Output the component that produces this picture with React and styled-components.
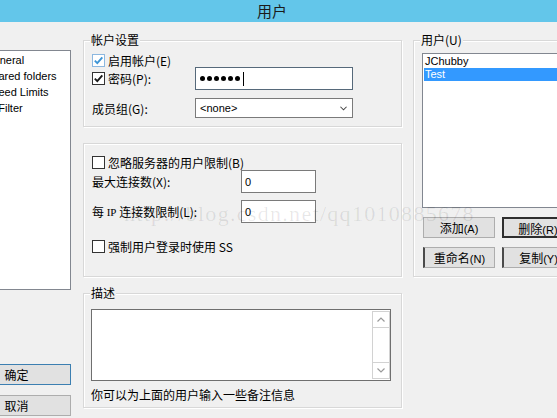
import React from 'react';
import styled, { createGlobalStyle } from 'styled-components';

const GlobalStyle = createGlobalStyle`
  html, body {
    margin: 0;
    padding: 0;
    background: #f0f0f0;
  }
  body {
    font-family: "Noto Sans CJK SC", "Noto Sans", sans-serif;
    font-size: 12px;
    color: #000;
  }
`;

const Window = styled.div`
  position: relative;
  width: 557px;
  height: 418px;
  overflow: hidden;
  background: #f0f0f0;
`;

const TitleBar = styled.div`
  height: 22px;
  background: #63c6ea;
  display: flex;
  align-items: center;
  justify-content: center;
  padding-right: 13px;
  font-size: 15px;
  line-height: 22px;
  color: #1b1b1b;
`;

const Body = styled.div`
  display: flex;
  align-items: flex-start;
  margin-left: -38px;
`;

const LeftColumn = styled.div`
  width: 109px;
  flex: none;
  display: flex;
  flex-direction: column;
  padding-top: 28px;
`;

const PageTree = styled.div`
  box-sizing: border-box;
  height: 240px;
  background: #fff;
  border: 1px solid #828790;
  padding-top: 1px;
  font-family: "Liberation Sans", Arial, sans-serif;
  font-size: 11px;
`;

const TreeItem = styled.div`
  height: 16px;
  line-height: 16px;
  padding-left: 22px;
  white-space: nowrap;
`;

const DialogButton = styled.button`
  box-sizing: border-box;
  height: 21px;
  margin: 0;
  margin-top: ${p => p.$mt || 0}px;
  padding: 0;
  background: #e1e1e1;
  border: 1px solid ${p => (p.$default ? '#3c7fb1' : '#adadad')};
  ${p => p.$focus && 'border: 2px solid #2e2e2e;'}
  ${p => p.$edge && 'border-left: 2px solid #4a4a4a;'}
  font-family: "Noto Sans CJK SC", "Noto Sans", sans-serif;
  font-size: 12px;
  line-height: 19px;
  color: #000;
  white-space: nowrap;

  small {
    font-family: "Liberation Sans", Arial, sans-serif;
    font-size: 11px;
  }
`;

const MiddleColumn = styled.div`
  width: 319px;
  flex: none;
  margin-left: 12px;
  padding-top: 18px;
  display: flex;
  flex-direction: column;
  gap: 16px;
`;

const RightColumn = styled.div`
  width: 170px;
  flex: none;
  margin-left: 11px;
  padding-top: 18px;
`;

const GroupBox = styled.div`
  position: relative;
  box-sizing: border-box;
  height: ${p => p.$h}px;
  border: 1px solid #d8d8d8;
  box-shadow: inset 1px 1px 0 #fff, 1px 1px 0 #fff;
  padding: ${p => p.$pad};
`;

const Legend = styled.span`
  position: absolute;
  top: -9px;
  left: 6px;
  padding: 0 1px;
  background: #f0f0f0;
  line-height: 16px;
  font-size: 12px;
`;

const Row = styled.div`
  display: flex;
  align-items: center;
  height: ${p => p.$h}px;
  margin-top: ${p => p.$mt || 0}px;
  white-space: nowrap;
`;

const LabelCell = styled.span`
  width: ${p => p.$w}px;
  flex: none;
  display: flex;
  align-items: center;
  white-space: pre;
`;

const Box = styled.span`
  box-sizing: border-box;
  width: 13px;
  height: 13px;
  flex: none;
  margin-right: 3px;
  display: inline-flex;
  align-items: center;
  justify-content: center;
  background: #fff;
  border: 1px solid ${p => (p.$accent ? '#8cb8e0' : '#333')};
`;

const Latin = styled.span`
  font-family: "Liberation Serif", serif;
  font-size: 11px;
`;

const Field = styled.div`
  box-sizing: border-box;
  width: ${p => p.$w}px;
  height: ${p => p.$h}px;
  flex: none;
  display: flex;
  align-items: center;
  justify-content: space-between;
  padding: 0 5px 0 ${p => p.$pl || 3}px;
  background: #fff;
  border: 1px solid ${p => (p.$focus ? '#56697a' : '#7a7a7a')};
  font-family: "Liberation Sans", Arial, sans-serif;
  font-size: 11px;
`;

const Dots = styled.span`
  display: flex;
  align-items: center;
  gap: 2px;
`;

const Dot = styled.span`
  width: 5px;
  height: 5px;
  border-radius: 50%;
  background: #000;
`;

const Caret = styled.span`
  width: 1px;
  height: 14px;
  margin-left: 1px;
  background: #000;
`;

const TextArea = styled.div`
  box-sizing: border-box;
  width: 300px;
  height: 72px;
  display: flex;
  justify-content: flex-end;
  padding: 1px 0;
  background: #fff;
  border: 1px solid #6f6f6f;
`;

const ScrollBar = styled.div`
  box-sizing: border-box;
  width: 18px;
  height: 100%;
  display: flex;
  flex-direction: column;
  justify-content: space-between;
  border: 1px solid #d2d2d2;
`;

const ScrollArrow = styled.div`
  height: 15px;
  display: flex;
  align-items: center;
  justify-content: center;
  border-${p => (p.$down ? 'top' : 'bottom')}: 1px solid #d2d2d2;
`;

const Hint = styled.div`
  margin-top: 6px;
  line-height: 16px;
  white-space: nowrap;
`;

const ListBox = styled.div`
  box-sizing: border-box;
  width: 152px;
  height: 155px;
  padding: 1px;
  background: #fff;
  border: 1px solid #828790;
  font-family: "Liberation Sans", Arial, sans-serif;
  font-size: 11px;
`;

const ListItem = styled.div`
  height: 13px;
  line-height: 13px;
  padding-left: 1px;
  background: ${p => (p.$selected ? '#3399ff' : 'transparent')};
  color: ${p => (p.$selected ? '#fff' : '#000')};
`;

const ButtonGrid = styled.div`
  display: grid;
  grid-template-columns: 72px 72px;
  column-gap: 7px;
  row-gap: 9px;
  margin: 9px 0 0 1px;
`;

const Watermark = styled.div`
  position: absolute;
  left: 124px;
  top: 203px;
  font-family: "Liberation Serif", "Times New Roman", serif;
  font-size: 22px;
  line-height: 22px;
  letter-spacing: 1.3px;
  color: rgba(0, 0, 0, 0.09);
  white-space: nowrap;
  pointer-events: none;
`;

const Check = ({ checked, accent }) => (
  <Box $accent={accent}>
    {checked && (
      <svg width="11" height="11" viewBox="0 0 11 11">
        <path d="M1.8 5.6 L4.3 8.1 L9.3 2.4" fill="none" stroke={accent ? '#3d95d6' : '#1a1a1a'} strokeWidth="1.9" />
      </svg>
    )}
  </Box>
);

const Chevron = ({ up, color = '#9a9a9a', w = 8 }) => (
  <svg width={w} height="5" viewBox="0 0 8 5">
    <path d={up ? 'M0.5 4.5 L4 1 L7.5 4.5' : 'M0.5 0.5 L4 4 L7.5 0.5'} fill="none" stroke={color} strokeWidth="1.2" />
  </svg>
);

export default function App() {
  return (
    <Window>
      <GlobalStyle />
      <TitleBar>用户</TitleBar>
      <Body>
        <LeftColumn>
          <PageTree>
            <TreeItem>General</TreeItem>
            <TreeItem>Shared folders</TreeItem>
            <TreeItem>Speed Limits</TreeItem>
            <TreeItem>IP Filter</TreeItem>
          </PageTree>
          <DialogButton $default $mt={74}>确定</DialogButton>
          <DialogButton $mt={10}>取消</DialogButton>
        </LeftColumn>

        <MiddleColumn>
          <GroupBox $h={87} $pad="12px 0 0 8px">
            <Legend>帐户设置</Legend>
            <Row $h={14}>
              <Check checked accent />启用帐户(E)
            </Row>
            <Row $h={23}>
              <LabelCell $w={103}>
                <Check checked />密码(P):
              </LabelCell>
              <Field $w={158} $h={23} $pl={4} $focus>
                <Dots>
                  {[0, 1, 2, 3, 4, 5].map(i => <Dot key={i} />)}
                  <Caret />
                </Dots>
              </Field>
            </Row>
            <Row $h={20} $mt={8}>
              <LabelCell $w={103}>成员组(G):</LabelCell>
              <Field $w={158} $h={20} $pl={4}>
                &lt;none&gt;
                <Chevron color="#444" w={7} />
              </Field>
            </Row>
          </GroupBox>

          <GroupBox $h={134} $pad="11px 0 0 8px">
            <Row $h={14}>
              <Check />忽略服务器的用户限制(B)
            </Row>
            <Row $h={23} $mt={1}>
              <LabelCell $w={149}>最大连接数(X):</LabelCell>
              <Field $w={75} $h={23}>0</Field>
            </Row>
            <Row $h={23} $mt={7}>
              <LabelCell $w={149}>每 <Latin>IP</Latin> 连接数限制(L):</LabelCell>
              <Field $w={75} $h={23}>0</Field>
            </Row>
            <Row $h={14} $mt={16}>
              <Check />强制用户登录时使用 SS
            </Row>
          </GroupBox>

          <GroupBox $h={115} $pad="15px 0 0 7px">
            <Legend>描述</Legend>
            <TextArea>
              <ScrollBar>
                <ScrollArrow><Chevron up /></ScrollArrow>
                <ScrollArrow $down><Chevron /></ScrollArrow>
              </ScrollBar>
            </TextArea>
            <Hint>你可以为上面的用户输入一些备注信息</Hint>
          </GroupBox>
        </MiddleColumn>

        <RightColumn>
          <GroupBox $h={237} $pad="12px 0 0 8px">
            <Legend>用户(U)</Legend>
            <ListBox>
              <ListItem>JChubby</ListItem>
              <ListItem $selected>Test</ListItem>
            </ListBox>
            <ButtonGrid>
              <DialogButton>添加<small>(A)</small></DialogButton>
              <DialogButton $focus>删除<small>(R)</small></DialogButton>
              <DialogButton $edge>重命名<small>(N)</small></DialogButton>
              <DialogButton $edge>复制<small>(Y)</small></DialogButton>
            </ButtonGrid>
          </GroupBox>
        </RightColumn>
      </Body>
      <Watermark>http://blog.csdn.net/qq1010885678</Watermark>
    </Window>
  );
}
